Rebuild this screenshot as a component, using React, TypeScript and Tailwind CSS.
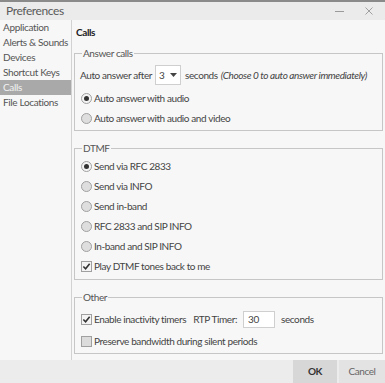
import React from "react";

const font = { fontFamily: 'Lato, "Noto Sans", sans-serif' };

const sections = [
  "Application",
  "Alerts & Sounds",
  "Devices",
  "Shortcut Keys",
  "Calls",
  "File Locations",
];

function Radio({ checked, label }: { checked?: boolean; label: string }) {
  return (
    <div className="flex h-[20px] items-center gap-[2px]">
      <span
        className={`flex h-[11px] w-[11px] shrink-0 items-center justify-center rounded-full border border-[#a0a0a0] ${
          checked ? "bg-[#f4f4f4]" : "bg-[#dedede]"
        }`}
      >
        {checked && <span className="h-[5px] w-[5px] rounded-full bg-[#333]" />}
      </span>
      <span>{label}</span>
    </div>
  );
}

function Check({ checked, children }: { checked?: boolean; children: React.ReactNode }) {
  return (
    <div className="flex h-[20px] items-center gap-[2px]">
      <span
        className={`flex h-[11px] w-[11px] shrink-0 items-center justify-center border border-[#a0a0a0] ${
          checked ? "bg-[#f4f4f4]" : "bg-[#dcdcdc]"
        }`}
      >
        {checked && (
          <svg width="9" height="9" viewBox="0 0 10 10" fill="none" stroke="#333" strokeWidth="1.8">
            <polyline points="1.5 5 4 7.5 8.5 2" />
          </svg>
        )}
      </span>
      {children}
    </div>
  );
}

function Group({
  title,
  className = "",
  children,
}: {
  title: string;
  className?: string;
  children: React.ReactNode;
}) {
  return (
    <fieldset className={`mx-[2px] border border-[#c6c6c6] px-[5px] ${className}`}>
      <legend className="ml-[2px] px-[1px] leading-[14px] text-[#555]">{title}</legend>
      {children}
    </fieldset>
  );
}

export default function App() {
  return (
    <div
      className="flex h-[383px] w-[385px] flex-col overflow-hidden border-t-2 border-[#8a8a8a] bg-[#f7f7f7] text-[10px] tracking-[-0.4px] text-[#444]"
      style={font}
    >
      {/* title bar */}
      <div className="flex h-[18px] shrink-0 items-center bg-[#ebebeb] pl-[6px] pr-[12px]">
        <span className="text-[12px] text-[#5a5a5a]">Preferences</span>
        <div className="ml-auto flex items-center gap-[21px]">
          <span className="h-[1px] w-[9px] bg-[#9a9a9a]" />
          <svg width="8" height="8" viewBox="0 0 8 8" stroke="#a0a0a0" strokeWidth="1">
            <path d="M0.5 0.5 7.5 7.5M7.5 0.5 0.5 7.5" />
          </svg>
        </div>
      </div>

      <div className="flex min-h-0 flex-1">
        {/* sidebar */}
        <div className="w-[72px] shrink-0 border-r border-[#d2d2d2]">
          {sections.map((s) => (
            <div
              key={s}
              className={`flex h-[15px] items-center whitespace-nowrap pl-[3px] tracking-[-0.35px] ${
                s === "Calls" ? "bg-[#a9a9a9] text-[#f2f2f2]" : "text-[#555]"
              }`}
            >
              {s}
            </div>
          ))}
        </div>

        {/* content */}
        <div className="flex-1 pt-[5px]">
          <div className="h-[15px] pl-[4px] font-bold leading-[15px] text-[#222]">Calls</div>

          <Group title="Answer calls" className="mt-[6px] pb-[2px]">
            <div className="mt-[5px] flex h-[20px] items-center whitespace-nowrap">
              <span className="mr-[3px]">Auto answer after</span>
              <span className="flex h-[20px] w-[26px] items-center justify-between border border-[#cfcfcf] bg-white pl-[3px] pr-[3px]">
                <span>3</span>
                <svg width="7" height="4" viewBox="0 0 7 4">
                  <path d="M0 0h7L3.5 4z" fill="#444" />
                </svg>
              </span>
              <span className="ml-[4px]">seconds</span>
              <span className="ml-[3px] italic">(Choose 0 to auto answer immediately)</span>
            </div>
            <div className="mt-[3px] pl-[1px]">
              <Radio checked label="Auto answer with audio" />
              <Radio label="Auto answer with audio and video" />
            </div>
          </Group>

          <Group title="DTMF" className="mt-[10px] pb-[3px]">
            <div className="mt-[1px] pl-[1px]">
              <Radio checked label="Send via RFC 2833" />
              <Radio label="Send via INFO" />
              <Radio label="Send in-band" />
              <Radio label="RFC 2833 and SIP INFO" />
              <Radio label="In-band and SIP INFO" />
              <Check checked>
                <span>Play DTMF tones back to me</span>
              </Check>
            </div>
          </Group>

          <Group title="Other" className="mt-[10px] pb-[2px]">
            <div className="mt-[5px] pl-[1px]">
              <Check checked>
                <span>Enable inactivity timers</span>
                <span className="ml-[5px]">RTP Timer:</span>
                <span className="ml-[4px] flex h-[17px] w-[32px] items-center border border-[#cfcfcf] bg-white pl-[4px]">
                  30
                </span>
                <span className="ml-[4px]">seconds</span>
              </Check>
              <div className="mt-[2px]">
                <Check>
                  <span>Preserve bandwidth during silent periods</span>
                </Check>
              </div>
            </div>
          </Group>
        </div>
      </div>

      {/* button bar */}
      <div className="flex h-[23px] shrink-0 justify-end bg-[#ececec]">
        <button className="w-[44px] bg-[#d7d7d7] font-bold text-[#333]">OK</button>
        <button className="ml-[2px] w-[46px] bg-[#e3e3e3] text-[#666]">Cancel</button>
      </div>
    </div>
  );
}
